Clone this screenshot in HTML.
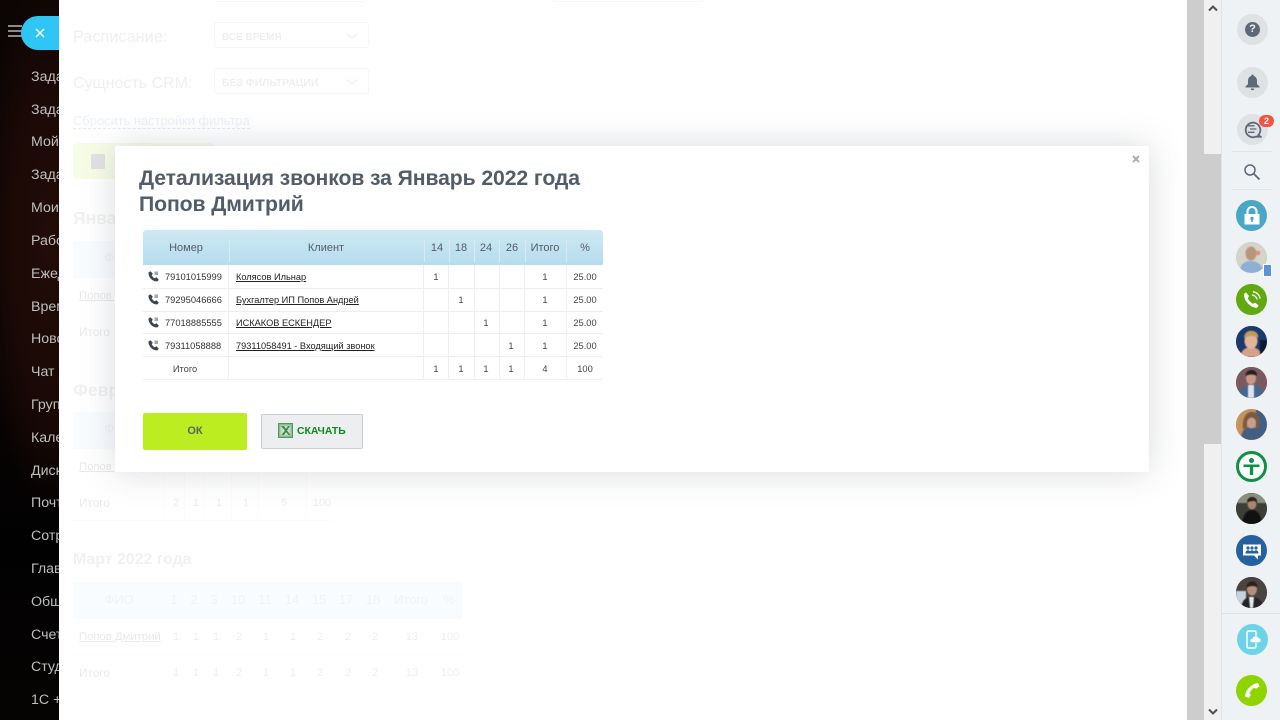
<!DOCTYPE html>
<html lang="ru"><head><meta charset="utf-8"><title>Детализация звонков</title>
<style>
html,body{margin:0;padding:0;width:1280px;height:720px;overflow:hidden;background:#fff;font-family:"Liberation Sans","Noto Sans CJK SC",sans-serif}
.a{position:absolute;white-space:nowrap}
.m{color:#bfbfbf;font-size:14.2px;left:31px;line-height:18px}
.f{color:#efefef}
.c{transform:translateX(-50%);font-size:11px;color:#eeeeee;line-height:14px}
.u{font-size:11.3px;color:#e9e9e9;text-decoration:underline;line-height:14px}
.i{font-size:11.8px;color:#eaeaea;line-height:14px}
.hb{transform:translateX(-50%);font-size:13px;color:#f1f1f1;line-height:16px}
.t{font-size:9.3px;color:#333;line-height:12px}
.tc{transform:translateX(-50%);font-size:9.3px;color:#444;line-height:12px}
.th{transform:translateX(-50%);font-size:11px;color:#535c69;line-height:14px}
.lnk{text-decoration:underline;color:#222;font-size:9.23px;line-height:12px}
.l{position:absolute;background:#eeeeee}
.g{position:absolute;background:#fcfcfc;width:1px}
.hd{position:absolute;top:240px;width:1px;height:22px;background:#d8eaf2}
.av{position:absolute;left:1236px;width:31px;height:31px;border-radius:50%;overflow:hidden}
.av svg{filter:blur(.6px);display:block}
.h2{left:73px;font-size:16px;font-weight:bold;line-height:20px;color:#f1f1f1}
</style></head><body>
<!-- left sidebar -->
<div class="a" style="left:0;top:0;width:59px;height:720px;background:radial-gradient(ellipse 70px 270px at 50px 240px,#220c07 0%,#1a0906 60%,rgba(10,4,3,0) 100%),linear-gradient(180deg,#0b0504 0%,#070303 60%,#020101 75%,#060303 100%)"></div>
<div class="a" style="left:8px;top:25px;width:14px;height:2px;background:#8a8a8a;box-shadow:0 5px 0 #8a8a8a,0 10px 0 #8a8a8a"></div>
<div class="a m" style="top:68px">Зада</div><div class="a m" style="top:101px">Зада</div><div class="a m" style="top:133px">Мой</div><div class="a m" style="top:166px">Зада</div><div class="a m" style="top:199px">Мои</div><div class="a m" style="top:232px">Рабо</div><div class="a m" style="top:265px">Ежед</div><div class="a m" style="top:298px">Врем</div><div class="a m" style="top:330px">Ново</div><div class="a m" style="top:363px">Чат и</div><div class="a m" style="top:396px">Груп</div><div class="a m" style="top:429px">Кале</div><div class="a m" style="top:462px">Диск</div><div class="a m" style="top:494px">Почт</div><div class="a m" style="top:527px">Сотр</div><div class="a m" style="top:560px">Глав</div><div class="a m" style="top:593px">Общ</div><div class="a m" style="top:626px">Счет</div><div class="a m" style="top:658px">Студ</div><div class="a m" style="top:691px">1С +</div>
<!-- main -->
<div class="a" style="left:59px;top:0;width:1128px;height:720px;background:#fff"></div>
<div class="a" style="left:21px;top:16px;width:38px;height:34px;background:#2fc6f6;border-radius:17px 0 0 17px"></div>
<svg class="a" style="left:35px;top:28px" width="10" height="10" viewBox="0 0 10 10"><path d="M1 1L9 9M9 1L1 9" stroke="#fff" stroke-width="1.5"/></svg>
<div class="a" style="left:215px;top:-10px;width:150px;height:10px;border:1px solid #f5f5f5;border-radius:3px"></div>
<div class="a" style="left:552px;top:-10px;width:150px;height:10px;border:1px solid #f5f5f5;border-radius:3px"></div>
<div class="a f" style="left:73px;top:28px;font-size:16.3px;line-height:19px">Расписание:</div>
<div class="a" style="left:214px;top:22px;width:153px;height:24px;border:1px solid #f5f5f5;border-radius:3px"></div>
<div class="a f" style="left:222px;top:31px;font-size:10px;font-weight:bold;line-height:13px">ВСЕ ВРЕМЯ</div>
<svg class="a" style="left:346px;top:32px" width="12" height="8" viewBox="0 0 12 8"><path d="M1 1.500L6 6.500L11 1.500" stroke="#f0f0f0" stroke-width="1.500" fill="none"/></svg>
<div class="a f" style="left:73px;top:74px;font-size:16px;line-height:19px">Сущность CRM:</div>
<div class="a" style="left:214px;top:68px;width:153px;height:24px;border:1px solid #f5f5f5;border-radius:3px"></div>
<div class="a f" style="left:222px;top:77px;font-size:10.4px;font-weight:bold;line-height:13px">БЕЗ ФИЛЬТРАЦИИ</div>
<svg class="a" style="left:346px;top:78px" width="12" height="8" viewBox="0 0 12 8"><path d="M1 1.500L6 6.500L11 1.500" stroke="#f0f0f0" stroke-width="1.500" fill="none"/></svg>
<div class="a" style="left:73px;top:113px;font-size:12.9px;line-height:15px;color:#ebf0f9;border-bottom:1px dashed #e3e9f6">Сбросить настройки фильтра</div>
<div class="a" style="left:73px;top:143px;width:141px;height:36px;background:#f6fce6;border-radius:3px"></div>
<div class="a" style="left:91px;top:154px;width:14px;height:15px;background:#e2e2e2;border-radius:1px"></div>
<div class="a h2" style="top:208px;font-size:17.500px">Январь 2022 года</div>
<div class="a" style="left:73px;top:241px;width:389px;height:37px;background:#f9fcff"></div>
<div class="a hb" style="left:119px;top:250px">ФИО</div>
<div class="a u" style="left:79px;top:289px">Попов Дмитрий</div>
<div class="a i" style="left:79px;top:325px">Итого</div>
<div class="a h2" style="top:380px;font-size:17.500px">Февраль 2022 года</div>
<div class="a" style="left:73px;top:412px;width:389px;height:37px;background:#f9fcff"></div>
<div class="a hb" style="left:119px;top:421px">ФИО</div>
<div class="a u" style="left:79px;top:460px">Попов Дмитрий</div>
<div class="a i" style="left:79px;top:496px">Итого</div>
<div class="g" style="left:164px;top:472px;height:48px"></div><div class="g" style="left:184px;top:472px;height:48px"></div><div class="g" style="left:204px;top:472px;height:48px"></div><div class="g" style="left:231px;top:472px;height:48px"></div><div class="g" style="left:258px;top:472px;height:48px"></div><div class="g" style="left:306px;top:472px;height:48px"></div>
<div class="g" style="left:73px;top:520px;height:1px;width:260px"></div>
<div class="a c" style="left:176px;top:496px">2</div><div class="a c" style="left:196px;top:496px">1</div><div class="a c" style="left:219px;top:496px">1</div><div class="a c" style="left:246px;top:496px">1</div><div class="a c" style="left:284px;top:496px">5</div><div class="a c" style="left:322px;top:496px">100</div>
<div class="a h2" style="top:550px;font-size:15.900px">Март 2022 года</div>
<div class="a" style="left:73px;top:582px;width:389px;height:37px;background:#f9fcff"></div>
<div class="a hb" style="left:119px;top:592px">ФИО</div><div class="a hb" style="left:174px;top:592px">1</div><div class="a hb" style="left:194px;top:592px">2</div><div class="a hb" style="left:214px;top:592px">3</div><div class="a hb" style="left:238px;top:592px">10</div><div class="a hb" style="left:265px;top:592px">11</div><div class="a hb" style="left:292px;top:592px">14</div><div class="a hb" style="left:319px;top:592px">15</div><div class="a hb" style="left:346px;top:592px">17</div><div class="a hb" style="left:373px;top:592px">18</div><div class="a hb" style="left:411px;top:592px">Итого</div><div class="a hb" style="left:449px;top:592px">%</div>
<div class="a u" style="left:79px;top:630px">Попов Дмитрий</div>
<div class="a c" style="left:176px;top:630px">1</div><div class="a c" style="left:196px;top:630px">1</div><div class="a c" style="left:216px;top:630px">1</div><div class="a c" style="left:239px;top:630px">2</div><div class="a c" style="left:266px;top:630px">1</div><div class="a c" style="left:293px;top:630px">1</div><div class="a c" style="left:320px;top:630px">2</div><div class="a c" style="left:348px;top:630px">2</div><div class="a c" style="left:375px;top:630px">2</div><div class="a c" style="left:412px;top:630px">13</div><div class="a c" style="left:450px;top:630px">100</div>
<div class="a i" style="left:79px;top:666px">Итого</div>
<div class="a c" style="left:176px;top:666px">1</div><div class="a c" style="left:196px;top:666px">1</div><div class="a c" style="left:216px;top:666px">1</div><div class="a c" style="left:239px;top:666px">2</div><div class="a c" style="left:266px;top:666px">1</div><div class="a c" style="left:293px;top:666px">1</div><div class="a c" style="left:320px;top:666px">2</div><div class="a c" style="left:348px;top:666px">2</div><div class="a c" style="left:375px;top:666px">2</div><div class="a c" style="left:412px;top:666px">13</div><div class="a c" style="left:450px;top:666px">100</div>
<div class="g" style="left:73px;top:654px;height:1px;width:389px"></div><div class="g" style="left:73px;top:690px;height:1px;width:389px"></div>
<!-- scrollbar -->
<div class="a" style="left:1187px;top:0;width:34px;height:720px;background:#cdcdcd"></div>
<div class="a" style="left:1204px;top:0;width:17px;height:154px;background:#f0f0f0"></div>
<div class="a" style="left:1204px;top:444px;width:17px;height:276px;background:#f0f0f0"></div>
<svg class="a" style="left:1208px;top:5px" width="10" height="7" viewBox="0 0 10 7"><path d="M1 5.500L5 1.500L9 5.500" stroke="#505050" stroke-width="2" fill="none"/></svg>
<svg class="a" style="left:1208px;top:708px" width="10" height="7" viewBox="0 0 10 7"><path d="M1 1.500L5 5.500L9 1.500" stroke="#505050" stroke-width="2" fill="none"/></svg>
<!-- right panel -->
<div class="a" style="left:1221px;top:0;width:59px;height:720px;background:#eef2f4;border-left:1px solid #e0e5e9;box-sizing:border-box"></div>
<div class="a" style="left:1237px;top:14px;width:31px;height:31px;border-radius:50%;background:#dfe2e5"></div>
<div class="a" style="left:1245px;top:22px;width:15px;height:15px;border-radius:50%;background:#5f6975;color:#eef2f4;font:bold 11px/15px 'Liberation Sans',sans-serif;text-align:center">?</div>
<div class="a" style="left:1237px;top:67px;width:31px;height:31px;border-radius:50%;background:#dfe2e5"></div>
<svg class="a" style="left:1245px;top:74px" width="15" height="17" viewBox="0 0 15 17"><path d="M7.500 0.500a1.300 1.300 0 0 1 1.300 1.500C11 2.700 12 4.500 12 7v3l2.500 2.500v1H.5v-1L3 10V7c0-2.500 1-4.300 3.200-5A1.300 1.300 0 0 1 7.500.5zM5.800 14.500h3.400a1.700 1.700 0 0 1-3.400 0z" fill="#5f6975"/></svg>
<div class="a" style="left:1237px;top:114px;width:31px;height:31px;border-radius:50%;background:#dfe2e5"></div>
<svg class="a" style="left:1243px;top:120px" width="19" height="19" viewBox="0 0 19 19"><path d="M15.300 15A7.300 7.300 0 1 0 12.800 16.700h4.700z" fill="none" stroke="#5f6975" stroke-width="1.800"/><path d="M5 5.800h6.500M7 9h6.500M5 12.300h6.500" stroke="#5f6975" stroke-width="1.300"/></svg>
<div class="a" style="left:1259px;top:115px;width:15px;height:12px;border-radius:6px;background:#f4533f;color:#fff;font:bold 9px/12px 'Liberation Sans',sans-serif;text-align:center">2</div>
<div class="a" style="left:1232px;top:151px;width:40px;height:1px;background:#e0e5e9"></div>
<svg class="a" style="left:1243px;top:163px" width="18" height="18" viewBox="0 0 18 18"><circle cx="7" cy="7" r="5" fill="none" stroke="#5f6975" stroke-width="1.500"/><path d="M10.800 10.800L16.500 16.500" stroke="#5f6975" stroke-width="1.800"/></svg>
<div class="a" style="left:1232px;top:189px;width:40px;height:1px;background:#e0e5e9"></div>
<div class="av" style="top:200px;background:#4aa6c6"></div>
<svg class="a" style="left:1243px;top:206px" width="18" height="19" viewBox="0 0 18 19"><path d="M4.500 8V5.500a4.500 4.500 0 0 1 9 0V8" fill="none" stroke="#fff" stroke-width="2"/><path d="M1.500 8h15v10.500h-15z" fill="#fff"/><circle cx="9" cy="12.500" r="1.700" fill="#4aa6c6"/><path d="M8.200 13h1.600v3H8.200z" fill="#4aa6c6"/></svg>
<div class="av" style="top:242px;background:#c9ccc4">
<svg width="31" height="31" viewBox="0 0 31 31"><rect width="31" height="31" fill="#d4d4cb"/><path d="M3 31c1-9 6-12 12-12s12 4 13 12z" fill="#8db0d6"/><ellipse cx="15" cy="11.500" rx="5.500" ry="7" fill="#b9957e"/><circle cx="22" cy="11" r="2.300" fill="#e28a80"/></svg></div>
<div class="a" style="left:1263px;top:264px;width:7px;height:11px;background:#5b93d8;border:1px solid #fff"></div>
<div class="av" style="top:284px;background:#62a80f"></div>
<svg class="a" style="left:1243px;top:291px" width="18" height="18" viewBox="0 0 18 18"><path d="M3 1.500L6 5 4.800 7.200c.9 2.300 2.900 4.400 5.400 5.600l2-1.200 3.500 3-1.600 2.200C8.300 17.300 0.500 10 1 3z" fill="#fff"/><path d="M9 4c2.500.2 4.500 2 5 4.500M10 .8c3.700.3 6.500 3 7 6.800" stroke="#fff" stroke-width="1.300" fill="none"/></svg>
<div class="av" style="top:326px;background:#1c3566"><svg width="31" height="31" viewBox="0 0 31 31"><rect width="31" height="31" fill="#1d3a6e"/><path d="M4 31c1-7 6-10 11-10s10 3 11 10z" fill="#d6a186"/><ellipse cx="15" cy="15" rx="6.500" ry="8" fill="#e2b498"/><path d="M8 12c0-6 5-8 9-7 3 .5 6 3 5 7-4-3-9-3-14 0z" fill="#c29a58"/><path d="M24 14h7v14h-7z" fill="#0d1a30"/></svg></div>
<div class="av" style="top:367px;background:#6a4f58"><svg width="31" height="31" viewBox="0 0 31 31"><rect width="31" height="31" fill="#7a5a60"/><path d="M3 31c0-9 5-13 12-13s13 4 13 13z" fill="#3f6896"/><path d="M12 18h6v13h-6z" fill="#dfe3e8"/><ellipse cx="15" cy="11" rx="5" ry="6.500" fill="#c59a85"/><path d="M9.500 9c0-5 4-6 6-6s6 1 5.500 6c-3-2-8-2-11.500 0z" fill="#2a1e1e"/></svg></div>
<div class="av" style="top:409px;background:#c28a58"><svg width="31" height="31" viewBox="0 0 31 31"><rect width="31" height="31" fill="#c6925f"/><path d="M20 0h11v31H20z" fill="#3c5f8c"/><path d="M5 31c0-9 4-13 10-13s11 4 11 13z" fill="#445e80"/><path d="M7 20C6 8 11 2 17 3c6 .5 8 7 7 15l-3 2V11c-3 0-8 0-10 1v8z" fill="#7a5a42"/><ellipse cx="15.500" cy="14" rx="4.500" ry="5.500" fill="#c9a088"/></svg></div>
<div class="av" style="top:451px;background:#fff;border:3.500px solid #0f9145;box-sizing:border-box"></div>
<svg class="a" style="left:1243px;top:458px" width="17" height="17" viewBox="0 0 17 17"><circle cx="8.500" cy="2.500" r="2.500" fill="#0f9145"/><path d="M0.500 6.500h16v2.500h-16z" fill="#0f9145"/><path d="M6.800 9h3.400v8H6.800z" fill="#0f9145"/></svg>
<div class="av" style="top:493px;background:#2c2c28"><svg width="31" height="31" viewBox="0 0 31 31"><rect width="31" height="31" fill="#3c3f36"/><path d="M0 0h31v10H0z" fill="#8a9080"/><path d="M6 31c1-10 5-14 10-14s9 4 10 14z" fill="#111"/><ellipse cx="16" cy="11" rx="4.500" ry="5.500" fill="#ad8570"/><path d="M11 10c0-5 3-6 5-6s6 1 5 7l-2-3c-3 0-6 0-8 2z" fill="#2e2018"/></svg></div>
<div class="av" style="top:535px;background:#23619f"></div>
<svg class="a" style="left:1242px;top:542px" width="20" height="20" viewBox="0 0 20 20"><path d="M1 2.500h18v11h-3v4l-4-4H1z" fill="#fff"/><circle cx="6" cy="6" r="1.600" fill="#23619f"/><circle cx="10" cy="6" r="1.600" fill="#23619f"/><circle cx="14" cy="6" r="1.600" fill="#23619f"/><path d="M3.500 11.500c0-2 1-3.200 2.500-3.200S8.500 9.500 8.500 11.500zM7.500 11.500c0-2 1-3.200 2.500-3.200s2.500 1.200 2.500 3.200zM11.500 11.500c0-2 1-3.200 2.500-3.200s2.500 1.200 2.500 3.200z" fill="#23619f"/></svg>
<div class="av" style="top:577px;background:#3a3532"><svg width="31" height="31" viewBox="0 0 31 31"><rect width="31" height="31" fill="#4a4440"/><path d="M0 14h10v17H0z" fill="#c6d2dc"/><path d="M5 31c1-8 5-11 11-11s10 3 11 11z" fill="#24242a"/><path d="M13 20h5l-1 11h-3z" fill="#e8e8e8"/><ellipse cx="16" cy="12" rx="5" ry="6.500" fill="#b58f78"/><path d="M10.500 11c0-5 3-6.500 6-6.500s5 2 5 6c-3-2-8-2-11 .5z" fill="#2a1f1a"/></svg></div>
<div class="a" style="left:1222px;top:613px;width:58px;height:1px;background:#dbe2e7"></div>
<div class="a" style="left:1237px;top:624px;width:31px;height:31px;border-radius:50%;background:#6dd4e8"></div>
<svg class="a" style="left:1246px;top:630px" width="16" height="19" viewBox="0 0 16 19"><path d="M1 2.500a1.500 1.500 0 0 1 1.500-1.500h6A1.500 1.500 0 0 1 10 2.500v14A1.500 1.500 0 0 1 8.500 18h-6A1.500 1.500 0 0 1 1 16.500z" fill="none" stroke="#fff" stroke-width="1.500"/><path d="M6 12.500a2 2 0 0 1 .4-4 3.200 3.200 0 0 1 6.100-.5 2.300 2.300 0 0 1 .8 4.500z" fill="#fff" stroke="#6dd4e8" stroke-width=".5"/></svg>
<div class="av" style="top:675px;background:#8fd400"></div>
<svg class="a" style="left:1244px;top:682px" width="16" height="17" viewBox="0 0 16 17"><path d="M1 14.500C1.500 8 7 2 14 1l1.500 3.500-3.500 2.300-1.700-1.300C8 7 6 9.500 5.500 11.500l1.500 1.200-2.300 3.300z" fill="#fff"/></svg>
<!-- modal -->
<div class="a" style="left:115px;top:146px;width:1034px;height:326px;background:#fff;box-shadow:0 0 32px rgba(83,92,105,.22)"></div>
<svg class="a" style="left:1132px;top:155px" width="8" height="8" viewBox="0 0 8 8"><path d="M1 1L7 7M7 1L1 7" stroke="#a8b0bb" stroke-width="2"/></svg>
<div class="a" style="left:139px;top:166px;font-size:21.2px;font-weight:bold;line-height:26px;color:#535c69;letter-spacing:-.1px">Детализация звонков за Январь 2022 года<br>Попов Дмитрий</div>
<div class="a" style="left:143px;top:230px;width:460px;height:35px;border-radius:3px 3px 0 0;background:linear-gradient(180deg,#cfe9f4,#b4dcee)"></div>
<div class="hd" style="left:229px"></div><div class="hd" style="left:424px"></div><div class="hd" style="left:449px"></div><div class="hd" style="left:474px"></div><div class="hd" style="left:499px"></div><div class="hd" style="left:525px"></div><div class="hd" style="left:566px"></div>
<div class="a th" style="left:186px;top:241px">Номер</div><div class="a th" style="left:326px;top:241px">Клиент</div><div class="a th" style="left:437px;top:241px">14</div><div class="a th" style="left:461px;top:241px">18</div><div class="a th" style="left:486px;top:241px">24</div><div class="a th" style="left:512px;top:241px">26</div><div class="a th" style="left:545px;top:241px">Итого</div><div class="a th" style="left:585px;top:241px">%</div>
<!-- table lines -->
<div class="l" style="left:143px;top:288px;width:460px;height:1px"></div><div class="l" style="left:143px;top:311px;width:460px;height:1px"></div><div class="l" style="left:143px;top:333px;width:460px;height:1px"></div><div class="l" style="left:143px;top:356px;width:460px;height:1px"></div><div class="l" style="left:143px;top:379px;width:460px;height:1px"></div>
<div class="l" style="left:228px;top:265px;width:1px;height:114px"></div><div class="l" style="left:423px;top:265px;width:1px;height:114px"></div><div class="l" style="left:448px;top:265px;width:1px;height:114px"></div><div class="l" style="left:474px;top:265px;width:1px;height:114px"></div><div class="l" style="left:499px;top:265px;width:1px;height:114px"></div><div class="l" style="left:524px;top:265px;width:1px;height:114px"></div><div class="l" style="left:566px;top:265px;width:1px;height:114px"></div>
<!-- rows -->
<svg class="a" style="left:148px;top:271px" width="12" height="11" viewBox="0 0 12 11"><path d="M2.500 0.300L4.800 2.600 3.700 4.300c.6 1.300 1.700 2.400 3 3l1.800-1 2.300 2.300-1.300 1.800C4.500 10.800.2 6 .5 1.500z" fill="#3f4650"/><path d="M6.500 .5h3.500v3.500H6.500z" fill="#a5a5a5"/></svg>
<svg class="a" style="left:148px;top:294px" width="12" height="11" viewBox="0 0 12 11"><path d="M2.500 0.300L4.800 2.600 3.700 4.300c.6 1.300 1.700 2.400 3 3l1.800-1 2.300 2.300-1.300 1.800C4.500 10.800.2 6 .5 1.500z" fill="#3f4650"/><path d="M6.500 .5h3.500v3.500H6.500z" fill="#a5a5a5"/></svg>
<svg class="a" style="left:148px;top:317px" width="12" height="11" viewBox="0 0 12 11"><path d="M2.500 0.300L4.800 2.600 3.700 4.300c.6 1.300 1.700 2.400 3 3l1.800-1 2.300 2.300-1.300 1.800C4.500 10.800.2 6 .5 1.500z" fill="#3f4650"/><path d="M6.500 .5h3.500v3.500H6.500z" fill="#a5a5a5"/></svg>
<svg class="a" style="left:148px;top:340px" width="12" height="11" viewBox="0 0 12 11"><path d="M2.500 0.300L4.800 2.600 3.700 4.300c.6 1.300 1.700 2.400 3 3l1.800-1 2.300 2.300-1.300 1.800C4.500 10.800.2 6 .5 1.500z" fill="#3f4650"/><path d="M6.500 .5h3.500v3.500H6.500z" fill="#a5a5a5"/></svg>
<div class="a t" style="left:165px;top:271px">79101015999</div><div class="a t" style="left:165px;top:294px">79295046666</div><div class="a t" style="left:165px;top:317px">77018885555</div><div class="a t" style="left:165px;top:340px">79311058888</div>
<div class="a lnk" style="left:236px;top:271px">Колясов Ильнар</div><div class="a lnk" style="left:236px;top:294px">Бухгалтер ИП Попов Андрей</div><div class="a lnk" style="left:236px;top:317px">ИСКАКОВ ЕСКЕНДЕР</div><div class="a lnk" style="left:236px;top:340px">79311058491 - Входящий звонок</div>
<div class="a tc" style="left:436px;top:271px">1</div><div class="a tc" style="left:461px;top:294px">1</div><div class="a tc" style="left:486px;top:317px">1</div><div class="a tc" style="left:511px;top:340px">1</div>
<div class="a tc" style="left:545px;top:271px">1</div><div class="a tc" style="left:545px;top:294px">1</div><div class="a tc" style="left:545px;top:317px">1</div><div class="a tc" style="left:545px;top:340px">1</div>
<div class="a tc" style="left:585px;top:271px">25.00</div><div class="a tc" style="left:585px;top:294px">25.00</div><div class="a tc" style="left:585px;top:317px">25.00</div><div class="a tc" style="left:585px;top:340px">25.00</div>
<div class="a tc" style="left:185px;top:363px">Итого</div><div class="a tc" style="left:436px;top:363px">1</div><div class="a tc" style="left:461px;top:363px">1</div><div class="a tc" style="left:486px;top:363px">1</div><div class="a tc" style="left:511px;top:363px">1</div><div class="a tc" style="left:545px;top:363px">4</div><div class="a tc" style="left:585px;top:363px">100</div>
<!-- buttons -->
<div class="a" style="left:143px;top:413px;width:104px;height:37px;background:#bbed21;border-radius:2px;text-align:center;font:bold 11px/36px 'Liberation Sans',sans-serif;color:#5a6360">ОК</div>
<div class="a" style="left:261px;top:414px;width:102px;height:35px;background:#eceef0;border:1px solid #c6cdd3;box-sizing:border-box;border-radius:2px"></div>
<svg class="a" style="left:278px;top:423px" width="15" height="15" viewBox="0 0 15 15"><rect x=".5" y=".5" width="14" height="14" fill="#8fb996" stroke="#4f9a58"/><path d="M2.500 2.500h10v10h-10z" fill="#c9dfcb"/><path d="M3 3l4 4.500L3.500 12h2.500L8 9l2.500 3H12.500L9 7.500 12 3H10L8 6 6 3z" fill="#3c8748"/></svg>
<div class="a" style="left:297px;top:425px;font-size:10.4px;font-weight:bold;line-height:14px;color:#0b8a1e">СКАЧАТЬ</div>
</body></html>
